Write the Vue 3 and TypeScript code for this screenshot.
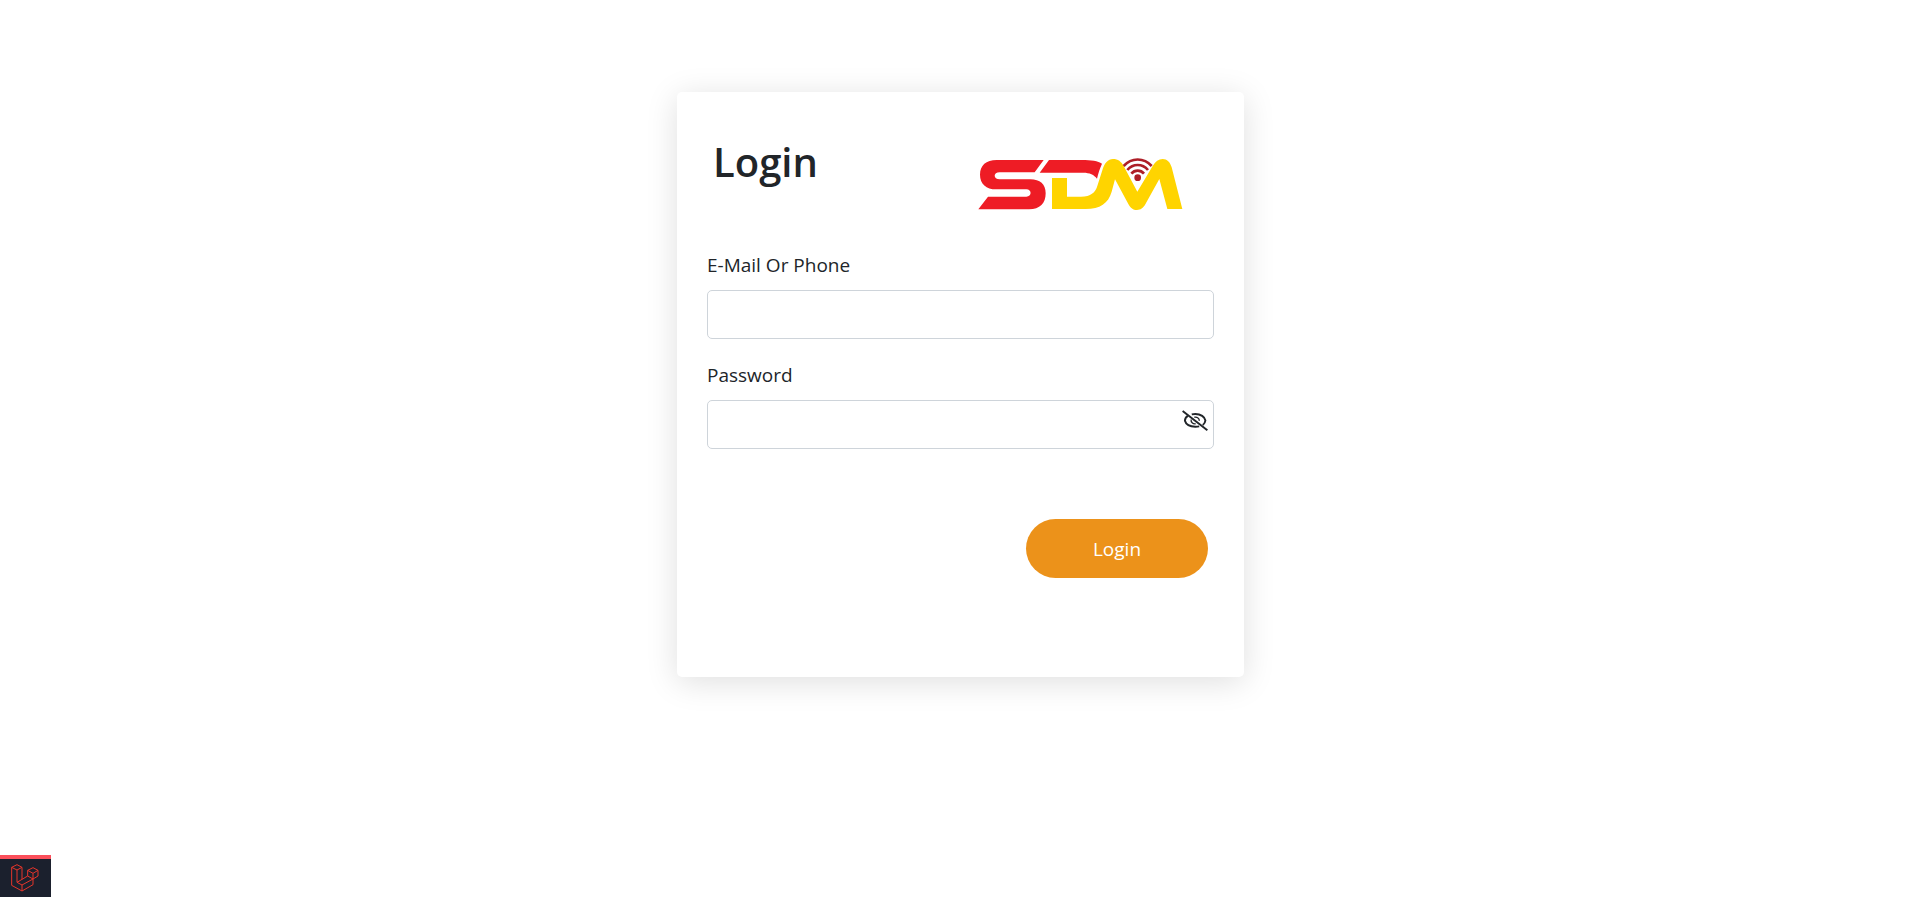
<script setup lang="ts">
import { ref } from 'vue'

const account = ref('')
const password = ref('')
const revealed = ref(false)
</script>

<template>
  <main class="page">
    <form class="card" @submit.prevent>
      <header class="head">
        <h1>Login</h1>
        <svg class="logo" viewBox="54 54 615 156" role="img" aria-label="SDM">
          <g fill="#ee1c25">
            <path d="M251 60 H110 C78 60 60 76 60 104 C60 132 79 148 108 148 H199 C216 148 216 170 199 170 H84 L55 208 H207 C240 208 257 190 257 160 C257 132 240 118 211 118 H119 C99 118 99 97 119 97 H224 Z" />
            <path d="M267 60 H365 C394 60 414 63 426 71 C420 84 415 99 411 116 C402 104 389 98 370 98 H239 Z" />
          </g>
          <path fill="#ffd400" d="M276 114 H321 V170 H363 C393 170 405 157 411 141 L427 91 C433 69 444 57 459 57 C474 57 484 65 491 78 L532 155 L578 78 C586 64 596 57 608 57 C621 57 630 66 635 82 L667 207 H622 L598 117 L556 193 C549 205 542 210 531 210 C519 210 512 205 505 192 L465 118 L455 155 C445 190 420 207 377 207 H276 Z" />
          <g fill="none" stroke="#ad1e27" stroke-width="8">
            <path d="M491 78 C514 52 552 52 575 78" />
            <path d="M502 90 C519 70 547 70 564 90" />
            <path d="M514 101 C524 89 542 89 552 101" />
          </g>
          <circle cx="533" cy="113" r="10" fill="#ad1e27" />
        </svg>
      </header>

      <div class="field">
        <label for="account">E-Mail Or Phone</label>
        <input id="account" v-model="account" type="text" autocomplete="username" />
      </div>

      <div class="field">
        <label for="password">Password</label>
        <div class="secret">
          <input
            id="password"
            v-model="password"
            :type="revealed ? 'text' : 'password'"
            autocomplete="current-password"
          />
          <button
            class="eye"
            type="button"
            aria-label="Show password"
            :aria-pressed="revealed"
            @click="revealed = !revealed"
          >
            <svg viewBox="64 60 80 64" fill="none" stroke="#212529" stroke-width="6">
              <path d="M66 63 L142 122" />
              <path d="M82 78 C75 82 73 88 73 93 C76 104 88 111 105 111 Q112 111 117 110" />
              <path d="M94 73 C98 72 101 72 105 72 C122 72 134 81 136 92 Q135 100 128 106" />
              <path d="M92 89 C91 97 97 103 106 102" stroke-width="4" />
              <path d="M102 82 C111 80 118 86 117 93" stroke-width="4" />
            </svg>
          </button>
        </div>
      </div>

      <div class="actions">
        <button class="submit" type="submit">Login</button>
      </div>
    </form>

    <button class="debug" type="button" aria-label="Open debug bar">
      <svg viewBox="32 73 84 84" fill="none" stroke="#e5352b" stroke-width="3" stroke-linejoin="round">
        <path d="M34 83 L50 75 L65 83 L50 91 Z" />
        <path d="M82 92 L98 84 L113 92 L98 101 Z" />
        <path d="M34 83 V137 L65 154 L98 135 V118 L113 109 V92" />
        <path d="M50 91 V128 L82 109 V92 M65 83 V119" />
        <path d="M50 128 L65 136 L98 118 V101 M82 109 L98 118 M65 136 V154" />
      </svg>
    </button>
  </main>
</template>

<style>
body {
  margin: 0;
  background: #fff;
}
</style>

<style scoped>
.page {
  box-sizing: border-box;
  min-height: 100vh;
  padding: 92px 16px 64px;
  font-family: "Segoe UI", "Open Sans", "Noto Sans", sans-serif;
  font-size: 19px;
  line-height: 30px;
  color: #212529;
}

.card {
  box-sizing: border-box;
  max-width: 567px;
  margin: 0 auto;
  padding: 46px 30px 99px;
  border-radius: 5px;
  background: #fff;
  box-shadow: 0 5px 32px rgba(0, 0, 0, 0.13);
}

.head {
  display: flex;
  justify-content: space-between;
  align-items: flex-start;
  padding: 0 31px 0 6px;
  margin-bottom: 40px;
}

h1 {
  margin: 0;
  font-size: 40px;
  line-height: 48px;
  font-weight: 600;
}

.logo {
  width: 205px;
  height: 52px;
  margin-top: 20px;
}

.field {
  margin-bottom: 21px;
}

label {
  display: block;
  margin-bottom: 10px;
}

input {
  display: block;
  box-sizing: border-box;
  width: 100%;
  height: 49px;
  padding: 8px 15px;
  border: 1px solid #ced4da;
  border-radius: 5px;
  background: #fff;
  font: inherit;
  color: inherit;
}

.secret {
  position: relative;
}

.eye {
  position: absolute;
  top: 10px;
  right: 6px;
  padding: 0;
  border: 0;
  background: none;
  cursor: pointer;
}

.eye svg {
  display: block;
  width: 26px;
  height: 21px;
}

.actions {
  display: flex;
  justify-content: flex-end;
  padding: 49px 6px 0;
}

.submit {
  width: 182px;
  height: 59px;
  border: 0;
  border-radius: 30px;
  background: #ec921a;
  font: inherit;
  color: #fff;
  cursor: pointer;
}

.debug {
  position: fixed;
  left: 0;
  bottom: 0;
  display: flex;
  justify-content: center;
  align-items: center;
  box-sizing: border-box;
  width: 51px;
  height: 42px;
  padding: 0 2px 0 0;
  border: 0;
  border-top: 4px solid #fb4f5b;
  background: #1b202d;
  cursor: pointer;
}

.debug svg {
  width: 28px;
  height: 28px;
}
</style>
